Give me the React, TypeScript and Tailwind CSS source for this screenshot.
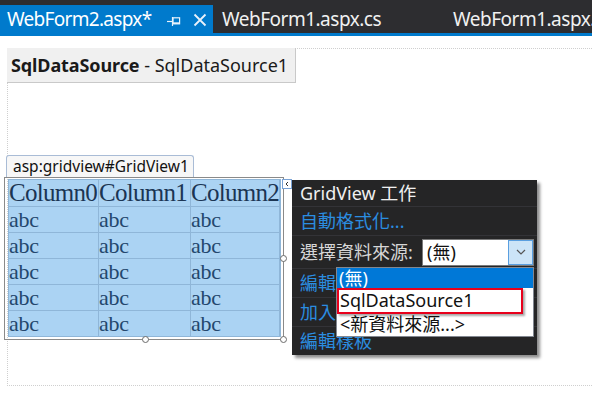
import React from "react";

const rows = [0, 1, 2, 3, 4];

export default function App() {
  return (
    <div className="relative w-[592px] h-[416px] overflow-hidden bg-white font-[family-name:'Noto_Sans','Noto_Sans_CJK_TC',sans-serif]">
      {/* Tab bar */}
      <div className="flex h-[33px] bg-[#2d2d30] pt-[5px] text-[19px] leading-none text-white">
        <div className="flex h-[28px] w-[213px] shrink-0 items-center bg-[#007acc] pl-[7px]">
          <span className="tracking-[-0.7px]">WebForm2.aspx*</span>
          <svg className="ml-[16px] mt-[3px]" width="14" height="10" viewBox="0 0 14 10">
            <path d="M0 5.5H5" stroke="#e8f2fb" strokeWidth="1.2" />
            <path d="M5.5 1V10" stroke="#e8f2fb" strokeWidth="1.2" />
            <rect x="6" y="1.8" width="6.6" height="6" fill="none" stroke="#e8f2fb" strokeWidth="1.2" />
            <path d="M6 7.2H12.8" stroke="#e8f2fb" strokeWidth="1.8" />
          </svg>
          <svg className="ml-[12px] mt-[2px]" width="14" height="14" viewBox="0 0 14 14">
            <path d="M1.5 1.5L12.5 12.5M12.5 1.5L1.5 12.5" stroke="#e8f2fb" strokeWidth="1.8" />
          </svg>
        </div>
        <div className="flex h-[28px] w-[240px] shrink-0 items-center pl-[9px] text-[#f1f1f1]">
          <span className="tracking-[-0.5px]">WebForm1.aspx.cs</span>
        </div>
        <div className="flex h-[28px] items-center text-[#f1f1f1] whitespace-nowrap">
          <span className="tracking-[-0.5px]">WebForm1.aspx.cs</span>
        </div>
      </div>
      <div className="h-[3px] bg-[#007acc]" />

      {/* Design surface */}
      <div className="relative">
        <div className="ml-[7px] mt-[12px] h-[338px] border-l border-t border-b border-dotted border-[#cfcfcf]">
          <div className="-mt-px -ml-px flex h-[35px] w-[289px] items-center bg-[#f0f0f0] border-r border-b border-[#c9c9c9] pl-[4px] text-[18px] text-[#1a1a1a] whitespace-nowrap">
            <span className="font-bold tracking-[-0.1px]">SqlDataSource</span>
            <span>&nbsp;- SqlDataSource1</span>
          </div>

          {/* GridView tag */}
          <div className="-ml-[2px] mt-[72px] flex h-[22px] w-[188px] items-center rounded-t-[3px] border border-b-0 border-[#a9bcd6] bg-[#f7f7f7] pl-[6px] text-[15.5px] text-[#111] whitespace-nowrap">
            asp:gridview#GridView1
          </div>

          {/* Grid selection */}
          <div className="relative -ml-[4px] w-[280px] border border-[#8a8a8a] pl-[3px] pr-[2px] pt-[1px] pb-[2px]">
            <div className="grid grid-cols-[89px_91px_88px] gap-px bg-[#8fb6d8] p-px font-[family-name:'Liberation_Serif',serif] text-[#1b3553]">
              {["Column0", "Column1", "Column2"].map((c) => (
                <div key={c} className="h-[26px] bg-[#abd3f3] text-[25px] leading-[26px] tracking-[-0.7px] whitespace-nowrap overflow-visible">
                  {c}
                </div>
              ))}
              {rows.map((r) =>
                [0, 1, 2].map((c) => (
                  <div key={`${r}-${c}`} className="h-[25px] bg-[#abd3f3] text-[22px] leading-[25px] tracking-[-0.3px] text-[#24476d]">
                    abc
                  </div>
                ))
              )}
            </div>
            {/* handles */}
            <div className="absolute right-[-4px] top-[77px] h-[7px] w-[7px] rounded-full border border-[#6b6b6b] bg-white" />
            <div className="absolute left-[137px] bottom-[-4px] h-[7px] w-[7px] rounded-full border border-[#6b6b6b] bg-white" />
            <div className="absolute right-[-4px] bottom-[-4px] h-[7px] w-[7px] rounded-full border border-[#6b6b6b] bg-white" />
            {/* smart tag glyph */}
            <div className="absolute right-[-9px] top-[1px] flex h-[10px] w-[10px] items-center justify-center border border-[#7aa3d6] bg-white">
              <svg width="6" height="6" viewBox="0 0 6 6">
                <path d="M4 1L2 3L4 5" fill="none" stroke="#333" strokeWidth="1" />
              </svg>
            </div>
          </div>
        </div>
      </div>

      {/* Smart tag panel */}
      <div className="absolute left-[292px] top-[180px] w-[245px] h-[175px] bg-[#252526] shadow-[3px_3px_3px_rgba(0,0,0,0.45)] flex flex-col text-[18px]">
        <div className="h-[27px] flex items-center pl-[8px] text-[#f0f0f0] border-b border-[#333337]">
          GridView 工作
        </div>
        <div className="h-[29px] flex items-center pl-[8px] text-[#2b8de0] border-b border-[#333337]">
          自動格式化...
        </div>
        <div className="h-[33px] flex items-center pl-[8px] pr-[3px] text-[#d6d6d6] border-b border-[#333337]">
          <span>選擇資料來源:</span>
          <div className="ml-auto flex h-[27px] w-[112px] border border-[#7a7a7a] bg-white">
            <span className="flex-1 pl-[4px] leading-[25px] text-[#111]">(無)</span>
            <div className="flex w-[25px] items-center justify-center border border-[#5a9fe0] bg-[#cce4f7]">
              <svg width="10" height="6" viewBox="0 0 10 6">
                <path d="M1 1L5 5L9 1" fill="none" stroke="#555" strokeWidth="1.2" />
              </svg>
            </div>
          </div>
        </div>
        <div className="h-[29px] flex items-center pl-[8px] text-[#2b8de0] border-b border-[#333337]">
          編輯資料行...
        </div>
        <div className="h-[29px] flex items-center pl-[8px] text-[#2b8de0] border-b border-[#333337]">
          加入新資料行...
        </div>
        <div className="h-[28px] flex items-center pl-[8px] text-[#2b8de0]">
          編輯樣板
        </div>
      </div>

      {/* Dropdown list */}
      <div className="absolute left-[336px] top-[267px] w-[198px] h-[70px] border border-[#828790] bg-white text-[18px] text-[#111] flex flex-col">
        <div className="h-[20px] bg-[#0078d7] text-white pl-[2px] leading-[20px]">(無)</div>
        <div className="relative h-[25px] pl-[3px] leading-[25px]">
          <div className="absolute left-0 top-0 h-[26px] w-[186px] border-2 border-[#e8001c] shadow-[2px_2px_2px_rgba(0,0,0,0.35)]" />
          <span className="relative">SqlDataSource1</span>
        </div>
        <div className="h-[22px] pl-[3px] leading-[22px]">&lt;新資料來源...&gt;</div>
      </div>
    </div>
  );
}
